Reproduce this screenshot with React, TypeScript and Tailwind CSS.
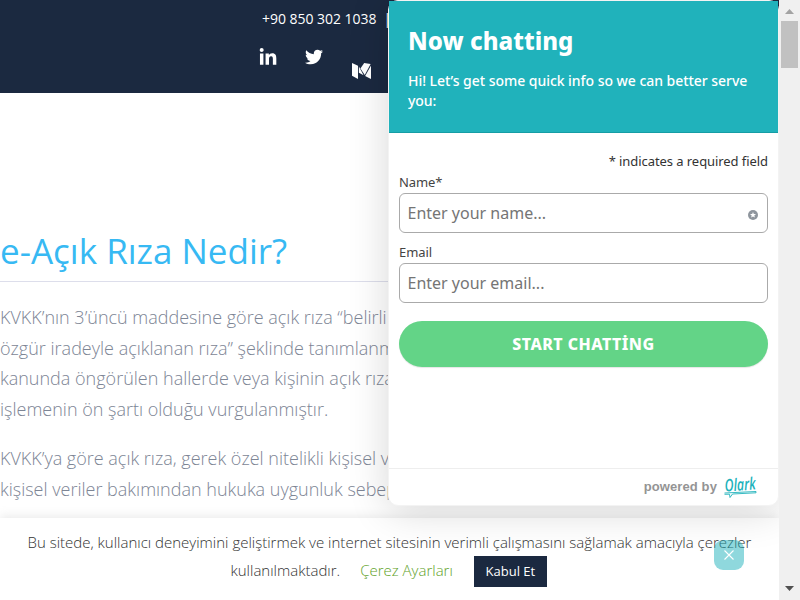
import { FaLinkedinIn, FaTwitter } from "react-icons/fa";

function MediumMark() {
  return (
    <svg className="h-4 w-[19px]" viewBox="0 0 19 16" fill="#fff">
      <path d="M0 0 L6 2.7 V16 L0 12.8 Z" />
      <path d="M6.9 3.5 L11.6 12.2 L6.9 9.8 Z" />
      <path d="M12.2 0 L18.6 0.9 L12.8 11.9 L8.4 5.5 Z" />
      <path d="M19 2.4 V16 L13.1 13 Z" />
    </svg>
  );
}

function SiteHeader() {
  return (
    <header className="h-[93px] bg-[#1b2940] text-white">
      <div className="flex h-[37px] items-center gap-[7px] pl-[262px] text-[14px] tracking-[-0.03px] whitespace-nowrap">
        <span>+90 850 302 1038</span>
        <span>|</span>
      </div>
      <div className="flex items-start pt-[11px] pl-[259px]">
        <FaLinkedinIn className="h-[19px] w-[18px]" />
        <FaTwitter className="ml-[28px] h-[18px] w-[18px]" />
        <div className="mt-[15px] ml-[29px]"><MediumMark /></div>
      </div>
    </header>
  );
}

function Article() {
  return (
    <main className="pt-[130px] whitespace-nowrap">
      <h1 className="h-[59px] border-b border-[#dddeeb] text-[35px] leading-[56px] text-[#37b9f3]">e-Açık Rıza Nedir?</h1>
      <div className="pt-[20px] text-[18px] leading-[30.6px] font-light text-[#7d8595]">
        <p className="mb-[18.6px]">
          KVKK’nın 3’üncü maddesine göre açık rıza “belirli bir<br />
          özgür iradeyle açıklanan rıza” şeklinde tanımlanmıştır<br />
          kanunda öngörülen hallerde veya kişinin açık rızası<br />
          işlemenin ön şartı olduğu vurgulanmıştır.
        </p>
        <p>
          KVKK’ya göre açık rıza, gerek özel nitelikli kişisel veriler<br />
          kişisel veriler bakımından hukuka uygunluk sebepleri
        </p>
      </div>
    </main>
  );
}

function CookieBar() {
  return (
    <div className="absolute top-[518px] left-0 h-[82px] w-[779px] bg-white text-[15px] font-light whitespace-nowrap text-[#333] shadow-[0_-1px_10px_rgba(172,171,171,0.3)]">
      <p className="pt-[10px] pl-[27.5px] leading-[28px]">
        Bu sitede, kullanıcı deneyimini geliştirmek ve internet sitesinin verimli çalışmasını sağlamak amacıyla çerezler
      </p>
      <div className="flex items-center pl-[230.5px]">
        <span className="-mt-[2px]">kullanılmaktadır.</span>
        <span className="-mt-[2px] ml-[20px] text-[#61a229]">Çerez Ayarları</span>
        <span className="ml-[21px] flex h-[31px] w-[73px] items-center justify-center bg-[#1b2940] text-[13px] font-normal text-white">Kabul Et</span>
      </div>
    </div>
  );
}

function OlarkLogo() {
  return (
    <svg className="h-[24px] w-[36px] overflow-visible" viewBox="0 0 36 24" fill="none" stroke="#20b2bb">
      <text x="2" y="16.5" transform="rotate(-4 2 16)" textLength="31" lengthAdjust="spacingAndGlyphs" fill="#20b2bb" stroke="none" fontSize="17" fontWeight="600" fontStyle="italic" fontFamily="Open Sans, sans-serif">Olark</text>
      <path d="M1.5 18 L33 16.5 L33 17.8 L9.5 19 L7 22.5 L6.5 19.2 L1.5 19.3" strokeWidth="0.9" />
    </svg>
  );
}

function Field({ label, hint, required }: { label: string; hint: string; required?: boolean }) {
  return (
    <label className="block">
      <span className="block h-[21px] text-[13px] leading-[20px] tracking-[-0.08px] text-[#444]">{label}</span>
      <span className="flex h-[40px] items-center justify-between rounded-[6px] border border-[#aaa] px-[7.5px] text-[16px] text-[#757575]">
        {hint}
        {required && (
          <svg className="mt-[4px] mr-[1.5px] size-[10px]" viewBox="0 0 10 10">
            <circle cx="5" cy="5" r="5" fill="#8e959d" />
            <path d="M5 2 L5.8 4 L8 4.1 L6.3 5.5 L6.9 7.6 L5 6.4 L3.1 7.6 L3.7 5.5 L2 4.1 L4.2 4Z" fill="#fff" />
          </svg>
        )}
      </span>
    </label>
  );
}

function ChatPanel() {
  return (
    <section className="absolute top-0 left-[388px] flex h-[506px] w-[391px] flex-col rounded-[10px] border border-[#f3f3f3] bg-white font-['Noto_Sans',sans-serif] shadow-[0_5px_40px_rgba(0,0,0,0.16)]">
      <header className="h-[132px] border-b border-[#159da5] bg-[#20b2bb] px-[19px] text-white">
        <h2 className="pt-[23px] text-[24px] leading-[34px] font-extrabold tracking-[0.05px]">Now chatting</h2>
        <p className="pt-[13px] text-[14px] leading-[20px] font-medium tracking-[-0.04px]">Hi! Let’s get some quick info so we can better serve you:</p>
      </header>
      <div className="flex-1 px-[10px] pt-[18px]">
        <p className="h-[20px] text-right text-[13px] leading-[20px] tracking-[-0.07px] text-[#333]">* indicates a required field</p>
        <div className="flex flex-col gap-[9px] pt-px">
          <Field label="Name*" hint="Enter your name..." required />
          <Field label="Email" hint="Enter your email..." />
        </div>
        <button className="mt-[18px] flex h-[46px] w-full items-center justify-center rounded-full bg-[#63d487] text-[16px] font-extrabold tracking-[0.45px] text-white shadow-[0_1px_1px_rgba(0,0,0,0.1)]">START CHATTİNG</button>
      </div>
      <footer className="flex h-[37px] items-center justify-end gap-[6px] border-t border-[#eee] pr-[19px] text-[13px] font-bold text-[#949494]">
        <span className="font-['Liberation_Sans',sans-serif] tracking-[0.1px]">powered by</span>
        <OlarkLogo />
      </footer>
    </section>
  );
}

function Scrollbar() {
  return (
    <div className="flex h-[600px] w-[21px] flex-col items-center bg-[#f0f0f0]">
      <svg className="mt-[9px] h-[5px] w-[9px]" viewBox="0 0 9 5"><path d="M0 5 L4.5 0 L9 5Z" fill="#a3a3a3" /></svg>
      <div className="mt-[7px] h-[47px] w-[17px] bg-[#c1c1c1]" />
      <svg className="mt-auto mb-[9px] h-[5px] w-[9px]" viewBox="0 0 9 5"><path d="M0 0 L4.5 5 L9 0Z" fill="#505050" /></svg>
    </div>
  );
}

export default function App() {
  return (
    <div className="relative flex h-[600px] w-[800px] overflow-hidden bg-white font-['Open_Sans',sans-serif]">
      <div className="relative h-[600px] w-[779px] overflow-hidden">
        <SiteHeader />
        <Article />
        <CookieBar />
        <ChatPanel />
        <button className="absolute top-[540px] left-[714px] flex size-[30px] items-center justify-center rounded-[9px] bg-[#20b2bb]/50">
          <svg className="size-[10px]" viewBox="0 0 10 10" stroke="#fff" strokeWidth="1.1"><path d="M.5 .5 L9.5 9.5 M9.5 .5 L.5 9.5" /></svg>
        </button>
      </div>
      <Scrollbar />
    </div>
  );
}
